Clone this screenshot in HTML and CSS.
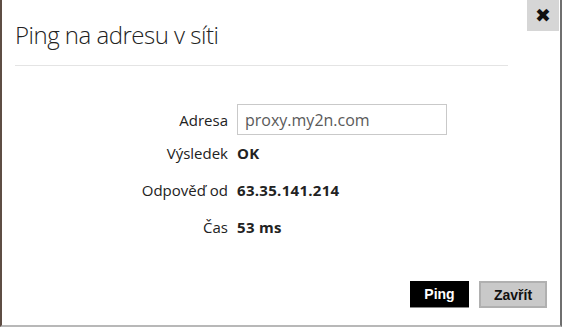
FILE: index.html
```html
<!DOCTYPE html>
<html lang="cs">
<head>
    <meta charset="UTF-8" />
    <title>Ping na adresu v síti</title>
    <link rel="stylesheet" href="styles.css">
</head>
<body>
    <div class="dialog">
        <button class="close" title="Zavřít">&#x2716;</button>
        <h1 class="title">Ping na adresu v síti</h1>

        <div class="form">
            <label for="address">Adresa</label>
            <input type="text" id="address" value="proxy.my2n.com" />

            <span class="label">Výsledek</span>
            <span class="value">OK</span>

            <span class="label">Odpověď od</span>
            <span class="value">63.35.141.214</span>

            <span class="label">Čas</span>
            <span class="value">53 ms</span>
        </div>

        <div class="actions">
            <button class="btn primary">Ping</button>
            <button class="btn secondary">Zavřít</button>
        </div>
    </div>
</body>
</html>
```

FILE: styles.css
```css
* {
    box-sizing: border-box;
    margin: 0;
    padding: 0;
}

body {
    background: #ffffff;
    font-family: "Open Sans", sans-serif;
    color: #222;
}

.dialog {
    position: relative;
    width: 562px;
    height: 327px;
    background: #fff;
    border-left: 2px solid #5e4d44;
    border-right: 2px solid #6f6f6f;
    border-bottom: 2px solid #b8b8b8;
    padding: 0 52px 0 13px;
}

.close {
    position: absolute;
    top: 0;
    right: 1px;
    width: 32px;
    height: 31px;
    border: none;
    background: #d6d6d6;
    color: #111;
    font-size: 19px;
    line-height: 31px;
    font-family: "DejaVu Sans", sans-serif;
    cursor: pointer;
}

.title {
    font-weight: 300;
    font-size: 24px;
    line-height: 34px;
    letter-spacing: -0.5px;
    padding-top: 18px;
    padding-bottom: 13px;
    border-bottom: 1px solid #e4e4e4;
    color: #222;
}

.form {
    display: grid;
    grid-template-columns: 213px 210px;
    column-gap: 9px;
    align-items: center;
    margin-top: 38px;
    font-size: 15px;
}

.form label,
.form .label {
    text-align: right;
    color: #222;
}

.form input {
    height: 31px;
    border: 1px solid #c9c9c9;
    padding: 0 7px;
    font-family: "Open Sans", sans-serif;
    font-size: 16px;
    color: #5a5a5a;
    outline: none;
}

.form .label,
.form .value {
    height: 37px;
    line-height: 37px;
}

.form .value {
    font-weight: 700;
    letter-spacing: 0.3px;
    color: #222;
}

.actions {
    display: flex;
    justify-content: flex-end;
    gap: 10px;
    margin-top: 35px;
    margin-right: -39px;
}

.btn {
    height: 27px;
    font-family: "Liberation Sans", Arial, sans-serif;
    font-weight: 700;
    font-size: 14px;
    cursor: pointer;
}

.primary {
    width: 59px;
    background: #000;
    color: #fff;
    border: none;
    border-bottom: 1px solid #888;
}

.secondary {
    width: 68px;
    background: #c9c9c9;
    color: #111;
    border: 2px solid #b0b0b0;
}
```
